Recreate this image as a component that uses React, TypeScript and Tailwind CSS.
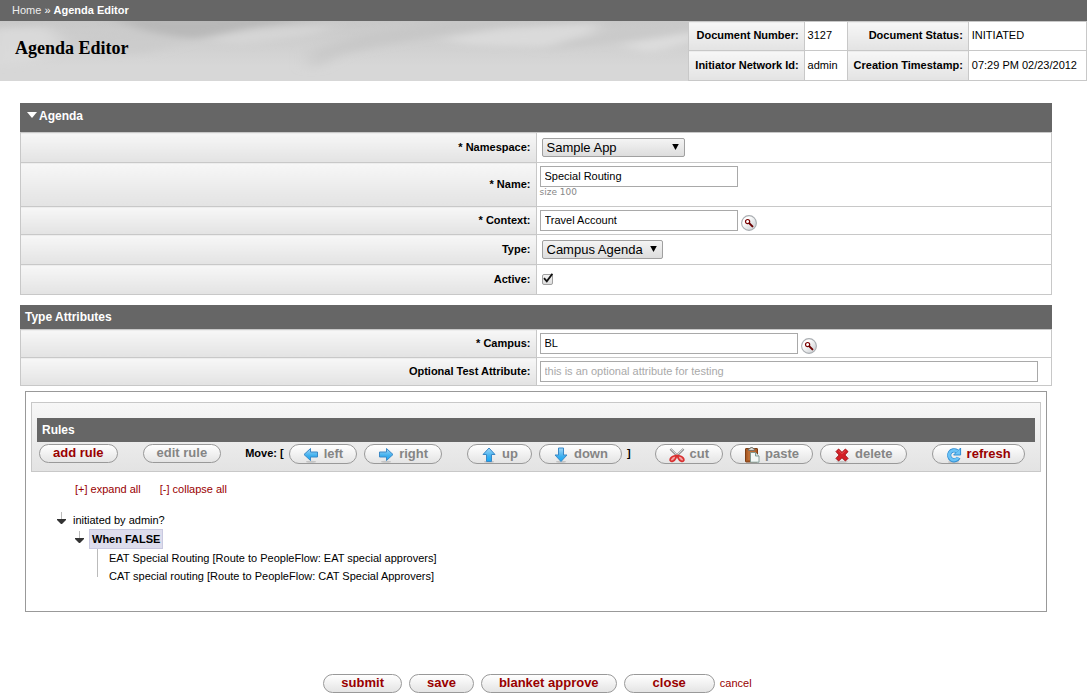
import { useState } from "react"
import type { ReactNode } from "react"

const gradient = "bg-linear-to-b from-[#f7f7f7] to-[#e3e3e3]"
const cellBorder = "border border-[#c8c8c8]"
const textInput = "h-[21px] max-w-full border border-[#a9a9a9] bg-white px-1 pb-[2px] text-[11px] placeholder:text-[#a9a9a9]"

/* Header */

function HeaderBackground() {
  return (
    <svg
      className="absolute inset-0 h-full w-full"
      viewBox="0 0 1087 60"
      preserveAspectRatio="none"
      aria-hidden="true"
    >
      <defs>
        <linearGradient id="haze" x1="0" y1="0" x2="0" y2="1">
          <stop offset="0" stopColor="#c8c8c8" />
          <stop offset="0.4" stopColor="#d0d0d0" />
          <stop offset="0.75" stopColor="#d7d7d7" />
          <stop offset="1" stopColor="#d7d7d7" />
        </linearGradient>
        <filter id="soft" x="-10%" y="-30%" width="120%" height="160%">
          <feGaussianBlur stdDeviation="9 3" />
        </filter>
      </defs>
      <rect width="1087" height="60" fill="url(#haze)" />
      <g filter="url(#soft)">
        <path d="M-10 8 L50 6 L60 20 L40 40 L-10 46 Z" fill="#dadada" opacity="0.9" />
        <path d="M110 -4 L320 -4 L250 7 L195 18 L150 12 Z" fill="#b4b4b4" opacity="0.8" />
        <path d="M70 14 L150 10 L190 20 L140 34 L80 30 Z" fill="#cacaca" opacity="0.7" />
        <path d="M205 18 L250 9 L340 4 L310 14 L240 24 Z" fill="#d6d6d6" opacity="0.9" />
        <path d="M310 50 L340 34 L380 25 L450 12 L520 0 L450 0 L360 14 L310 30 Z" fill="#c4c4c4" opacity="0.65" />
        <path d="M440 18 L500 8 L600 2 L590 14 L550 26 L470 24 Z" fill="#dcdcdc" opacity="0.9" />
        <path d="M540 30 L570 18 L640 6 L700 2 L700 8 L620 20 Z" fill="#c9c9c9" opacity="0.8" />
        <path d="M620 24 L700 10 L700 18 L650 32 Z" fill="#dedede" opacity="0.9" />
      </g>
    </svg>
  )
}

function InfoLabel({ children }: { children: ReactNode }) {
  return (
    <th scope="row" className={`${cellBorder} ${gradient} pr-[5px] pb-[2px] pl-[6px] text-right font-bold`}>
      {children}
    </th>
  )
}

function InfoValue({ children }: { children: ReactNode }) {
  return <td className={`${cellBorder} bg-white pr-[9px] pb-[2px] pl-[3px]`}>{children}</td>
}

/* Form parts */

interface FieldRowProps {
  id: string
  label: string
  height: string
  children: ReactNode
}

function FieldRow({ id, label, height, children }: FieldRowProps) {
  return (
    <tr>
      <th scope="row" className={`${cellBorder} ${gradient} ${height} w-1/2 pr-[5px] pb-[2px] text-right font-bold`}>
        <label htmlFor={id}>{label}</label>
      </th>
      <td className={`${cellBorder} bg-white pt-[3px] pl-[3px] align-top`}>{children}</td>
    </tr>
  )
}

interface SelectBoxProps {
  id: string
  width: string
  options: string[]
}

function SelectBox({ id, width, options }: SelectBoxProps) {
  return (
    <div className={`relative mt-[2px] ml-[2px] ${width}`}>
      <select
        id={id}
        className="block h-[19px] w-full appearance-none rounded-[2px] border border-[#a0a0a0] bg-linear-to-b from-[#f4f4f4] to-[#dddddd] pl-1 text-[13px] leading-[17px]"
      >
        {options.map((option) => (
          <option key={option}>{option}</option>
        ))}
      </select>
      <svg className="pointer-events-none absolute top-[6px] right-[6px] h-[6px] w-[7px]" viewBox="0 0 7 6" aria-hidden="true">
        <path d="M0.2 0H6.8L3.5 6Z" fill="#000" />
      </svg>
    </div>
  )
}

function LookupButton({ label }: { label: string }) {
  return (
    <button type="button" aria-label={label} className="mt-[5px] h-4 w-4 cursor-pointer">
      <svg className="block h-4 w-4" viewBox="0 0 16 16" aria-hidden="true">
        <defs>
          <linearGradient id="lookup-face" x1="0" y1="0" x2="1" y2="1">
            <stop offset="0.3" stopColor="#fff" />
            <stop offset="1" stopColor="#c4c8cc" />
          </linearGradient>
        </defs>
        <circle cx="8" cy="8" r="7.4" fill="url(#lookup-face)" stroke="#a9adb1" strokeWidth="1.1" />
        <circle cx="6.6" cy="6.6" r="2.1" fill="#fff" stroke="#7a0000" strokeWidth="1.2" />
        <path d="M8.4 8.4L11.4 11.4" stroke="#6b0000" strokeWidth="2" strokeLinecap="round" />
      </svg>
    </button>
  )
}

/* Toolbar icons */

function ArrowIcon({ path }: { path: string }) {
  return (
    <svg className="h-4 w-4" viewBox="0 0 16 16" aria-hidden="true">
      <defs>
        <linearGradient id="arrow-fill" x1="0" y1="0" x2="0" y2="1">
          <stop offset="0" stopColor="#a4d8f8" />
          <stop offset="0.6" stopColor="#3fb0ee" />
          <stop offset="1" stopColor="#12a8f8" />
        </linearGradient>
      </defs>
      <ellipse cx="8" cy="14.8" rx="5" ry="1" fill="#000" opacity="0.15" />
      <path d={path} fill="url(#arrow-fill)" stroke="#3a88c6" strokeWidth="1" strokeLinejoin="round" />
    </svg>
  )
}

const LEFT_ARROW = "M1 7.5L7.5 1.5V5H14.5V10H7.5V13.5Z"
const RIGHT_ARROW = "M15 7.5L8.5 1.5V5H1.5V10H8.5V13.5Z"
const UP_ARROW = "M8 1L14 7.5H10.5V14.5H5.5V7.5H2Z"
const DOWN_ARROW = "M8 14.5L14 8H10.5V1H5.5V8H2Z"

function CutIcon() {
  return (
    <svg className="h-4 w-4" viewBox="0 0 16 16" fill="none" aria-hidden="true">
      <path d="M1.5 2L10.5 11M14.5 2L5.5 11" stroke="#8c8c8c" strokeWidth="2.4" />
      <path d="M1.8 2L10.5 10.6M14.2 2L5.5 10.6" stroke="#e4e4e4" strokeWidth="1" />
      <path d="M7.4 8.6L5 9C2.5 9.6 0.8 12 1.2 13.4C2 15.2 5.5 14.2 6.8 11.2Z" fill="#f4a0a0" stroke="#d93030" strokeWidth="1.7" />
      <path d="M8.6 8.6L11 9C13.5 9.6 15.2 12 14.8 13.4C14 15.2 10.5 14.2 9.2 11.2Z" fill="#f4a0a0" stroke="#d93030" strokeWidth="1.7" />
    </svg>
  )
}

function PasteIcon() {
  return (
    <svg className="h-4 w-4" viewBox="0 0 16 16" aria-hidden="true">
      <rect x="1.5" y="1.5" width="12" height="13.5" rx="0.5" fill="#a95a25" stroke="#7c3f16" />
      <rect x="3.5" y="3" width="8" height="10" fill="#bb6d35" />
      <path d="M4.5 3.5V1.8H6L6.6 0.5H8.6L9.2 1.8H10.5V3.5Z" fill="#d5d5d0" stroke="#66665f" strokeWidth="0.8" />
      <path d="M6.5 5.5H11.5L15 9V15.2H6.5Z" fill="#f2f8f6" stroke="#789490" strokeWidth="0.9" />
      <path d="M11.5 5.5V9H15" fill="#d5e4e2" stroke="#789490" strokeWidth="0.9" />
    </svg>
  )
}

function DeleteIcon() {
  return (
    <svg className="h-4 w-4" viewBox="0 0 16 16" aria-hidden="true">
      <ellipse cx="8" cy="14.8" rx="6" ry="0.9" fill="#000" opacity="0.15" />
      <path
        d="M4.6 2L8 5.4L11.4 2L14 4.6L10.8 8L14 11.4L11.4 14L8 10.7L4.6 14L2 11.4L5.2 8L2 4.6Z"
        fill="#d52027"
        stroke="#a30f12"
        strokeWidth="1"
        strokeLinejoin="round"
      />
      <path d="M4.6 3.4L8 6.8L11.4 3.4" fill="none" stroke="#e65050" strokeWidth="0.9" />
    </svg>
  )
}

function RefreshIcon() {
  return (
    <svg className="h-4 w-4" viewBox="0 0 16 16" fill="none" aria-hidden="true">
      <ellipse cx="7.5" cy="15" rx="5.5" ry="0.9" fill="#000" opacity="0.15" />
      <path d="M12.6 10.6A5 5 0 1 1 11 4.2" stroke="#2f8dd2" strokeWidth="4.2" />
      <path d="M14.6 1V8H7.6Z" fill="#6cc3f5" stroke="#2f8dd2" strokeWidth="1" strokeLinejoin="round" />
      <path d="M12.2 10.8A4.9 4.9 0 1 1 11.4 4.6" stroke="#6ac2f6" strokeWidth="2.8" />
    </svg>
  )
}

interface PillButtonProps {
  children: ReactNode
  icon?: ReactNode
  disabled?: boolean
  padding?: string
}

function PillButton({ children, icon, disabled = false, padding = "px-[13px]" }: PillButtonProps) {
  return (
    <button
      type="button"
      disabled={disabled}
      className={`flex items-center rounded-full border border-[#999] bg-linear-to-b from-white to-[#e4e4e4] text-[13px] leading-[15px] font-bold whitespace-nowrap ${padding} ${
        icon ? "h-5 gap-[5px]" : "h-[19px]"
      } ${disabled ? "text-[#858585]" : "cursor-pointer text-[#990000]"}`}
    >
      {icon && <span className="pt-[2px]">{icon}</span>}
      <span className="pb-[2px]">{children}</span>
    </button>
  )
}

/* Rule tree */

function TreeToggle({ open, onClick, label }: { open: boolean; onClick: () => void; label: string }) {
  return (
    <button type="button" onClick={onClick} aria-expanded={open} aria-label={label} className="h-4 w-[9px] cursor-pointer">
      <svg className="block h-4 w-[9px]" viewBox="0 0 9 16" aria-hidden="true">
        <path d="M4.5 0V8" stroke="#bbb" />
        <path d={open ? "M0 7H9V8L5 12H4L0 8Z" : "M2 4H3L8 8V9L3 13H2Z"} fill="#333" />
      </svg>
    </button>
  )
}

const ruleActions = [
  "EAT Special Routing [Route to PeopleFlow: EAT special approvers]",
  "CAT special routing [Route to PeopleFlow: CAT Special Approvers]",
]

function RuleTree() {
  const [ruleOpen, setRuleOpen] = useState(true)
  const [branchOpen, setBranchOpen] = useState(true)

  const setAll = (open: boolean) => {
    setRuleOpen(open)
    setBranchOpen(open)
  }

  return (
    <div className="pt-[10px] pb-[26px]">
      <div className="flex gap-[19px] pl-[49px] leading-[14px] text-[#990000]">
        <button type="button" className="cursor-pointer" onClick={() => setAll(true)}>[+] expand all</button>
        <button type="button" className="cursor-pointer" onClick={() => setAll(false)}>[-] collapse all</button>
      </div>

      <ul className="mt-[14px] pl-[31px]">
        <li>
          <div className="flex h-[19px] items-center gap-[7px]">
            <TreeToggle open={ruleOpen} onClick={() => setRuleOpen(!ruleOpen)} label="Toggle rule" />
            <span>initiated by admin?</span>
          </div>
          {ruleOpen && (
            <ul className="pl-[18px]">
              <li>
                <div className="flex h-5 items-center gap-[5px]">
                  <TreeToggle open={branchOpen} onClick={() => setBranchOpen(!branchOpen)} label="Toggle branch" />
                  <span className="h-5 border border-[#c9c9e0] bg-[#dddded] px-[2px] leading-[18px] font-bold">
                    When FALSE
                  </span>
                </div>
                {branchOpen && (
                  <ul className="ml-[22px]">
                    {ruleActions.map((action) => (
                      <li key={action} className="group flex h-[18px] gap-[11px] leading-[18px]">
                        <span className="h-full w-px bg-[#bbb] group-last:h-[10px]" />
                        {action}
                      </li>
                    ))}
                  </ul>
                )}
              </li>
            </ul>
          )}
        </li>
      </ul>
    </div>
  )
}

export default function App() {
  const [agendaOpen, setAgendaOpen] = useState(true)

  return (
    <div className="bg-white font-['Liberation_Sans',Arial,sans-serif] text-[11px] leading-[14px] text-black">
      <nav className="h-[21px] bg-[#666] pl-3 leading-[21px] text-white">
        <a href="#" className="text-[#eee]">Home</a> » <strong>Agenda Editor</strong>
      </nav>

      <header className="relative flex justify-between bg-[#d7d7d7]">
        <HeaderBackground />
        <h1 className="relative pt-4 pl-[15px] font-['Liberation_Serif',serif] text-[18px] leading-[22px] font-bold">
          Agenda Editor
        </h1>
        <table className="relative border-collapse whitespace-nowrap">
          <tbody>
            <tr className="h-[29px]">
              <InfoLabel>Document Number:</InfoLabel>
              <InfoValue>3127</InfoValue>
              <InfoLabel>Document Status:</InfoLabel>
              <InfoValue>INITIATED</InfoValue>
            </tr>
            <tr className="h-[30px]">
              <InfoLabel>Initiator Network Id:</InfoLabel>
              <InfoValue>admin</InfoValue>
              <InfoLabel>Creation Timestamp:</InfoLabel>
              <InfoValue>07:29 PM 02/23/2012</InfoValue>
            </tr>
          </tbody>
        </table>
      </header>

      <main className="mt-[22px] mr-[35px] ml-5">
        {/* Agenda */}
        <section>
          <h2 className="h-[29px] bg-[#666] px-[7px] text-[12px] leading-[26px] font-bold text-white">
            <button
              type="button"
              aria-expanded={agendaOpen}
              onClick={() => setAgendaOpen(!agendaOpen)}
              className="flex cursor-pointer items-center gap-[2px]"
            >
              <svg className="mb-[2px] h-[6px] w-[10px]" viewBox="0 0 10 6" aria-hidden="true">
                <path d="M0 0H10L5 6Z" fill="#fff" />
              </svg>
              Agenda
            </button>
          </h2>
          {agendaOpen && (
            <table className="w-full table-fixed border-collapse">
              <tbody>
                <FieldRow id="namespace" label="* Namespace:" height="h-[30px]">
                  <SelectBox id="namespace" width="w-[143px]" options={["Sample App"]} />
                </FieldRow>
                <FieldRow id="name" label="* Name:" height="h-11">
                  <input id="name" type="text" defaultValue="Special Routing" maxLength={100} className={`${textInput} block w-[198px]`} />
                  <p className="font-['DejaVu_Sans',sans-serif] text-[9px] leading-[10px] text-[#888]">size 100</p>
                </FieldRow>
                <FieldRow id="context" label="* Context:" height="h-7">
                  <div className="flex gap-[3px]">
                    <input id="context" type="text" defaultValue="Travel Account" className={`${textInput} w-[198px]`} />
                    <LookupButton label="Look up context" />
                  </div>
                </FieldRow>
                <FieldRow id="type" label="Type:" height="h-[30px]">
                  <SelectBox id="type" width="w-[121px]" options={["Campus Agenda"]} />
                </FieldRow>
                <FieldRow id="active" label="Active:" height="h-[30px]">
                  <div className="relative mt-[6px] ml-[2px] h-[11px] w-[11px]">
                    <input
                      id="active"
                      type="checkbox"
                      defaultChecked
                      className="peer block h-[11px] w-[11px] appearance-none rounded-[2px] border border-[#a0a0a0] bg-linear-to-b from-[#f4f4f4] to-[#dddddd]"
                    />
                    <svg
                      className="pointer-events-none absolute bottom-[2px] left-px hidden h-[10px] w-[10px] peer-checked:block"
                      viewBox="0 0 10 10"
                      aria-hidden="true"
                    >
                      <path d="M1 5.2L3.8 8.4L9.4 0.8" fill="none" stroke="#111" strokeWidth="1.8" />
                    </svg>
                  </div>
                </FieldRow>
              </tbody>
            </table>
          )}
        </section>

        {/* Type attributes */}
        <section className="mt-[10px]">
          <h2 className="h-6 bg-[#666] px-[5px] text-[12px] leading-6 font-bold text-white">Type Attributes</h2>
          <table className="w-full table-fixed border-collapse">
            <tbody>
              <FieldRow id="campus" label="* Campus:" height="h-7">
                <div className="flex gap-[3px]">
                  <input id="campus" type="text" defaultValue="BL" className={`${textInput} w-[258px]`} />
                  <LookupButton label="Look up campus" />
                </div>
              </FieldRow>
              <FieldRow id="optional" label="Optional Test Attribute:" height="h-7">
                <input
                  id="optional"
                  type="text"
                  placeholder="this is an optional attribute for testing"
                  className={`${textInput} block w-[498px]`}
                />
              </FieldRow>
            </tbody>
          </table>
        </section>

        {/* Rules */}
        <section className="mx-[5px] mt-[5px] border border-[#999] pt-[10px]">
          <div className={`mx-[5px] border border-[#c8c8c8] ${gradient} px-[5px] pt-[15px] pb-[7px]`}>
            <h2 className="h-6 bg-[#666] px-[5px] text-[12px] leading-6 font-bold text-white">Rules</h2>
            <div className="flex items-start gap-[25px] pt-[2px] pl-[2px]">
              <PillButton>add rule</PillButton>
              <PillButton disabled>edit rule</PillButton>
              <div className="-mx-px flex gap-[25px]">
                <div className="flex gap-[7px]">
                  <span className="-mr-[2px] leading-[19px] font-bold">Move: [</span>
                  <PillButton disabled icon={<ArrowIcon path={LEFT_ARROW} />}>left</PillButton>
                  <PillButton disabled icon={<ArrowIcon path={RIGHT_ARROW} />}>right</PillButton>
                </div>
                <div className="flex gap-[7px]">
                  <PillButton disabled icon={<ArrowIcon path={UP_ARROW} />}>up</PillButton>
                  <PillButton disabled icon={<ArrowIcon path={DOWN_ARROW} />}>down</PillButton>
                  <span className="-ml-[2px] leading-[19px] font-bold">]</span>
                </div>
              </div>
              <div className="flex gap-[7px]">
                <PillButton disabled icon={<CutIcon />}>cut</PillButton>
                <PillButton disabled icon={<PasteIcon />}>paste</PillButton>
                <PillButton disabled icon={<DeleteIcon />}>delete</PillButton>
              </div>
              <PillButton icon={<RefreshIcon />}>refresh</PillButton>
            </div>
          </div>
          <RuleTree />
        </section>
      </main>

      <footer className="mt-[62px] flex justify-center gap-[7px] pr-3 pb-1">
        <PillButton padding="px-[17px]">submit</PillButton>
        <PillButton padding="px-[17px]">save</PillButton>
        <PillButton padding="px-[17px]">blanket approve</PillButton>
        <PillButton padding="px-7">close</PillButton>
        <a href="#" className="-ml-[2px] leading-[19px] text-[#990000]">cancel</a>
      </footer>
    </div>
  )
}
